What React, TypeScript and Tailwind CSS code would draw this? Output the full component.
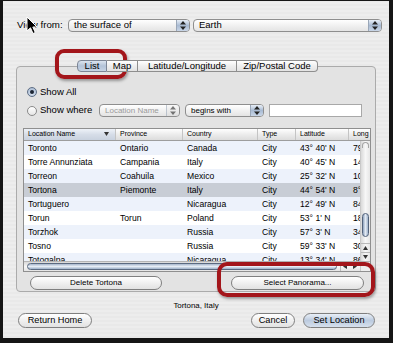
import React from "react"

const rows = [
  ["Toronto", "Ontario", "Canada", "City", "43° 40' N", "79° 23' W"],
  ["Torre Annunziata", "Campania", "Italy", "City", "40° 45' N", "14° 27' E"],
  ["Torreon", "Coahuila", "Mexico", "City", "25° 32' N", "103° 26' W"],
  ["Tortona", "Piemonte", "Italy", "City", "44° 54' N", "8° 52' E"],
  ["Tortuguero", "", "Nicaragua", "City", "12° 49' N", "84° 12' W"],
  ["Torun", "Torun", "Poland", "City", "53° 1' N", "18° 36' E"],
  ["Torzhok", "", "Russia", "City", "57° 3' N", "34° 58' E"],
  ["Tosno", "", "Russia", "City", "59° 33' N", "30° 52' E"],
  ["Totogalpa", "", "Nicaragua", "City", "13° 34' N", "86° 29' W"],
]

// little up/down arrows used by the popup menus
function Stepper() {
  return (
    <svg width="6" height="9" viewBox="0 0 6 9">
      <path d="M0 3.5 L3 0 L6 3.5 Z" fill="#222" />
      <path d="M0 5.5 L3 9 L6 5.5 Z" fill="#222" />
    </svg>
  )
}

function Arrow({ dir }: { dir: "up" | "down" | "left" | "right" }) {
  const d = {
    up: "M0 4 L2.5 0 L5 4 Z",
    down: "M0 0 L2.5 4 L5 0 Z",
    left: "M4 0 L0 2.5 L4 5 Z",
    right: "M0 0 L4 2.5 L0 5 Z",
  }[dir]
  return (
    <svg width="5" height="5" viewBox="0 0 5 5">
      <path d={d} fill="#333" />
    </svg>
  )
}

function Popup({ label, className, disabled }: { label: string; className: string; disabled?: boolean }) {
  return (
    <div
      className={`flex h-full items-stretch overflow-hidden rounded-[4px] border border-[#8e8e8e] bg-[linear-gradient(#ffffff,#f1f1f1_50%,#e4e4e4)] ${className}`}
    >
      <div className={`flex flex-1 items-center pl-[5px] whitespace-nowrap ${disabled ? "text-[#9a9a9a]" : "text-black"}`}>
        {label}
      </div>
      <div
        className={`flex w-[13px] items-center justify-center border-l border-[#9aa7b8] ${
          disabled ? "bg-[linear-gradient(#f4f4f4,#dcdcdc)] opacity-60" : "bg-[linear-gradient(#e7eef7,#a9bbd3_50%,#c9d6e7)]"
        }`}
      >
        <Stepper />
      </div>
    </div>
  )
}

function Button({ label, className, primary }: { label: string; className: string; primary?: boolean }) {
  return (
    <div
      className={`flex items-center justify-center rounded-full border border-[#7f7f7f] whitespace-nowrap ${
        primary
          ? "bg-[linear-gradient(#e9eff7,#bccbdf_50%,#d6e0ed)]"
          : "bg-[linear-gradient(#ffffff,#f0f0f0_50%,#e2e2e2)]"
      } ${className}`}
    >
      {label}
    </div>
  )
}

function Radio({ on }: { on?: boolean }) {
  return on ? (
    <div className="flex h-[10px] w-[10px] items-center justify-center rounded-full border border-[#5f6f86] bg-[radial-gradient(circle_at_50%_70%,#dbe5f2,#9fb2cc)]">
      <div className="h-[4px] w-[4px] rounded-full bg-[#1c2533]" />
    </div>
  ) : (
    <div className="h-[10px] w-[10px] rounded-full border border-[#8a8a8a] bg-[linear-gradient(#ffffff,#e6e6e6)]" />
  )
}

const cols = ["w-[92px]", "w-[67px]", "w-[75px]", "w-[38px]", "w-[53px]"]

export default function App() {
  return (
    <div className="relative h-[343px] w-[393px] overflow-hidden border-t-[1px] border-r-[4px] border-b-[5px] border-l-[3px] border-[#151515] bg-[repeating-linear-gradient(0deg,#e9e9e9_0px,#e9e9e9_2px,#ededed_2px,#ededed_4px)] font-['Liberation_Sans',Arial,sans-serif] text-black">
      {/* View from */}
      <div className="mt-[18px] flex h-[13px] items-center pl-[14px] text-[9.7px]">
        <div className="w-[51px] whitespace-nowrap">View from:</div>
        <Popup label="the surface of" className="w-[122px] text-[9.5px]" />
        <Popup label="Earth" className="ml-[3px] w-[189px] text-[9.5px]" />
      </div>

      {/* Tabs + box */}
      <div className="mt-[28px] ml-[13px] flex w-[360px] flex-col">
        <div className="relative z-10 ml-[61px] flex h-[12px] text-[9.5px]">
          <div className="flex w-[30px] items-center justify-center rounded-l-[4px] border border-[#7d8696] bg-[linear-gradient(#dbe4ef,#b3c3d8_50%,#c7d4e5)]">
            List
          </div>
          <div className="flex w-[31px] items-center justify-center border-y border-r border-[#8e8e8e] bg-[linear-gradient(#ffffff,#eeeeee_50%,#e3e3e3)]">
            Map
          </div>
          <div className="flex w-[99px] items-center justify-center border-y border-r border-[#8e8e8e] bg-[linear-gradient(#ffffff,#eeeeee_50%,#e3e3e3)]">
            Latitude/Longitude
          </div>
          <div className="flex w-[81px] items-center justify-center rounded-r-[4px] border-y border-r border-[#8e8e8e] bg-[linear-gradient(#ffffff,#eeeeee_50%,#e3e3e3)]">
            Zip/Postal Code
          </div>
        </div>

        <div className="-mt-[6px] h-[226px] rounded-[4px] border border-[#ababab] bg-[#e3e3e3]">
          {/* radios */}
          <div className="mt-[19px] flex h-[12px] items-center pl-[10px] text-[9.5px]">
            <Radio on />
            <span className="ml-[3px]">Show All</span>
          </div>
          <div className="mt-[6px] flex h-[13px] items-center pl-[10px] text-[9.5px]">
            <Radio />
            <span className="ml-[3px] w-[59px] whitespace-nowrap">Show where</span>
            <Popup label="Location Name" className="w-[81px] text-[8px]" disabled />
            <Popup label="begins with" className="ml-[5px] w-[79px] text-[8px]" />
            <div className="ml-[5px] h-full w-[93px] border border-[#a8a8a8] bg-white" />
          </div>

          {/* table */}
          <div className="mt-[11px] ml-[6px] w-[348px] border border-[#8f8f8f] bg-white">
            <div className="flex h-[12px] border-b border-[#9d9d9d] bg-[linear-gradient(#ffffff,#ececec_50%,#dcdcdc)] text-[7px]">
              <div className="flex w-[92px] items-center justify-between border-r border-[#c4c4c4] bg-[linear-gradient(#eef2f8,#d6dde8_50%,#c9d2df)] pr-[6px] pl-[4px]">
                <span>Location Name</span>
                <Arrow dir="down" />
              </div>
              <div className="flex w-[67px] items-center border-r border-[#c4c4c4] pl-[4px]">Province</div>
              <div className="flex w-[75px] items-center border-r border-[#c4c4c4] pl-[4px]">Country</div>
              <div className="flex w-[38px] items-center border-r border-[#c4c4c4] pl-[4px]">Type</div>
              <div className="flex w-[53px] items-center border-r border-[#c4c4c4] pl-[4px]">Latitude</div>
              <div className="flex flex-1 items-center pl-[4px]">Long</div>
            </div>

            <div className="flex h-[120px]">
              <div className="w-[336px] overflow-hidden text-[8.6px]">
                {rows.map((r, i) => (
                  <div
                    key={r[0]}
                    className={`flex h-[14px] w-[336px] items-center overflow-hidden whitespace-nowrap ${
                      i === 3 ? "bg-[#c8cdd5]" : i % 2 === 0 ? "bg-[#edf2fb]" : "bg-white"
                    }`}
                  >
                    {r.slice(0, 5).map((c, j) => (
                      <div key={j} className={`${cols[j]} shrink-0 overflow-hidden pl-[4px]`}>
                        {c}
                      </div>
                    ))}
                    <div className="w-[11px] shrink-0 overflow-hidden pl-[4px]">{r[5].slice(0, 2)}</div>
                  </div>
                ))}
              </div>
              {/* vertical scroller */}
              <div className="flex w-[10px] flex-col border-l border-[#c9c9c9] bg-[linear-gradient(90deg,#d9d9d9,#f7f7f7_50%,#e6e6e6)]">
                <div className="flex-1 px-[1px] pt-[1px]">
                  <div className="h-[6px] rounded-t-full border-x border-t border-[#a5a5a5]" />
                  <div className="mt-[65px] h-[24px] rounded-full border border-[#53627a] bg-[linear-gradient(90deg,#8ea2bd,#e3eaf3_50%,#9fb2ca)]" />
                </div>
                <div className="flex h-[9px] items-center justify-center border-t border-[#b9b9b9]">
                  <Arrow dir="up" />
                </div>
                <div className="flex h-[9px] items-center justify-center border-t border-[#b9b9b9]">
                  <Arrow dir="down" />
                </div>
              </div>
            </div>

            {/* horizontal scroller */}
            <div className="flex h-[10px] border-t border-[#b5b5b5] bg-[linear-gradient(#d8d8d8,#f6f6f6_50%,#e4e4e4)]">
              <div className="flex-1 px-[3px] py-[1px]">
                <div className="h-full rounded-full border border-[#5b6a80] bg-[linear-gradient(#a7b7cd,#e6edf5_50%,#9cb0c9)]" />
              </div>
              <div className="flex w-[20px] items-center justify-around border-l border-[#b9b9b9]">
                <Arrow dir="left" />
                <Arrow dir="right" />
              </div>
              <div className="w-[10px] border-l border-[#c9c9c9] bg-[#eeeeee]" />
            </div>
          </div>

          {/* box buttons */}
          <div className="mt-[4px] flex h-[14px] pl-[13px] text-[8px]">
            <Button label="Delete Tortona" className="w-[132px]" />
            <Button label="Select Panorama..." className="ml-[69px] w-[133px]" />
          </div>
        </div>
      </div>

      <div className="mt-[9px] flex h-[10px] items-center justify-center text-[7.9px]">Tortona, Italy</div>

      <div className="mt-[2px] flex h-[15px] pr-[14px] pl-[15px] text-[9.2px]">
        <Button label="Return Home" className="w-[74px]" />
        <Button label="Cancel" className="ml-auto w-[44px]" />
        <Button label="Set Location" className="ml-[8px] w-[72px]" primary />
      </div>

      {/* highlight marks drawn over the dialog */}
      <div className="absolute top-[48px] left-[52px] h-[30px] w-[72px] rounded-[9px] border-[4px] border-[#a3161b] shadow-[1px_2px_3px_rgba(0,0,0,0.35)]" />
      <div className="absolute top-[261px] left-[214px] h-[35px] w-[158px] rounded-[10px] border-[4px] border-[#a3161b] shadow-[1px_2px_3px_rgba(0,0,0,0.35)]" />

      {/* mouse pointer */}
      <svg className="absolute top-[15px] left-[23px]" width="13" height="19" viewBox="0 0 13 19">
        <path d="M1 1 L1 15 L4.5 11.8 L7 17.5 L9.3 16.5 L6.8 11 L11 11 Z" fill="#000" stroke="#fff" strokeWidth="1" strokeLinejoin="round" />
      </svg>
    </div>
  )
}
